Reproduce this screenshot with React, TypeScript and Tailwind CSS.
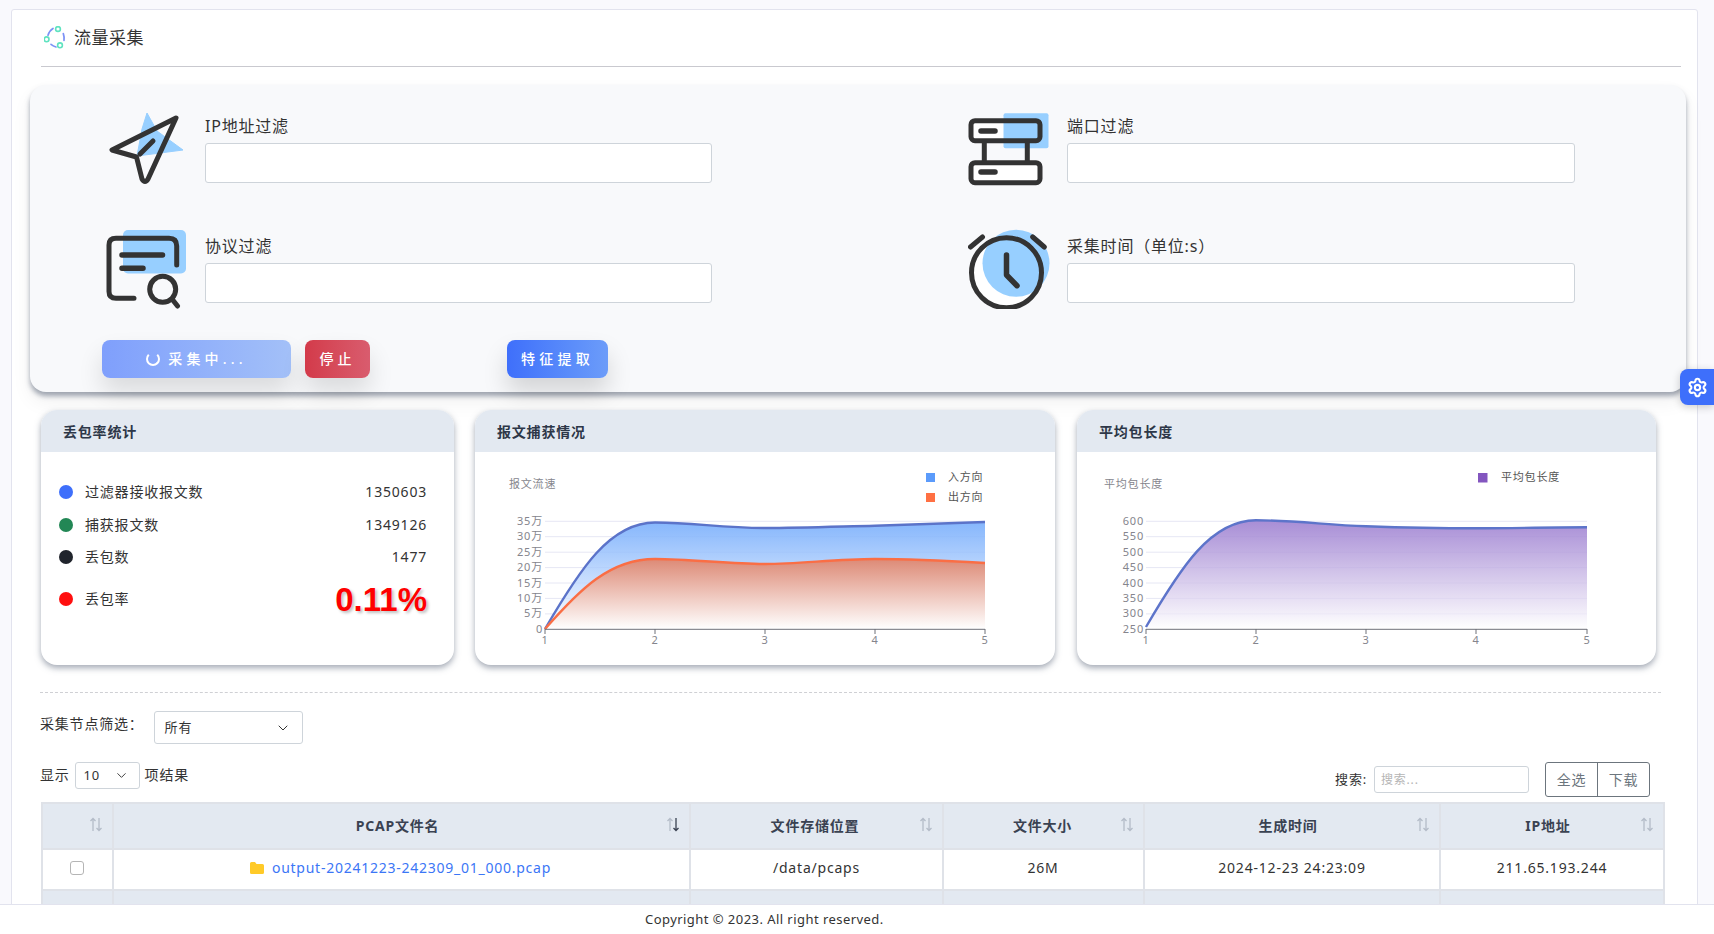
import { ChevronDown, Settings } from "lucide-react"

const cols = [
  { label: "", w: "w-[71px]", pad: "" },
  { label: "PCAP文件名", w: "w-[577px]", pad: "pr-[8px]", active: true },
  { label: "文件存储位置", w: "w-[253px]", pad: "pr-[3px]" },
  { label: "文件大小", w: "w-[201px]", pad: "pr-[2px]" },
  { label: "生成时间", w: "w-[296px]", pad: "pr-[8px]" },
  { label: "IP地址", w: "w-[224px]", pad: "pr-[8px]" },
]

function PlaneIcon() {
  return (
    <svg width="84" height="80" viewBox="0 0 84 80" fill="none" className="shrink-0">
      <path d="M42 4 L52 22 L78 41 L32 47 L37 20 Z" fill="#97cfff" stroke="#97cfff" strokeWidth="1" strokeLinejoin="round" />
      <path
        d="M71 9 L7 41 L31.5 48 L37 70 Q40 75 43 70 Z"
        stroke="#333"
        strokeWidth="5"
        strokeLinejoin="round"
      />
      <path d="M35 45 L48 32" stroke="#333" strokeWidth="5" strokeLinecap="round" />
    </svg>
  )
}

function DocIcon() {
  return (
    <svg width="84" height="80" viewBox="0 0 84 80" fill="none" className="shrink-0">
      <rect x="18" y="1" width="63" height="43.5" rx="5" fill="#97cfff" />
      <path
        d="M71.7 36 V17 Q71.7 9.3 64 9.3 H11 Q4 9.3 4 16 V62.5 Q4 69.3 11 69.3 H29"
        stroke="#333"
        strokeWidth="5"
        strokeLinecap="round"
      />
      <path d="M17 26 H57.5 M17 39.3 H38" stroke="#333" strokeWidth="5.5" strokeLinecap="round" />
      <circle cx="57.7" cy="60.3" r="13" stroke="#333" strokeWidth="5" />
      <path d="M67 70 L72.5 77" stroke="#333" strokeWidth="5" strokeLinecap="round" />
    </svg>
  )
}

function ServerIcon() {
  return (
    <svg width="84" height="80" viewBox="0 0 84 80" fill="none" className="shrink-0">
      <rect x="3" y="11.7" width="69" height="20" rx="4" fill="#fff" />
      <rect x="3" y="53.7" width="69" height="20" rx="4" fill="#fff" />
      <rect x="35.5" y="4.3" width="45" height="35" rx="2" fill="#97cfff" />
      <rect x="3" y="11.7" width="69" height="20" rx="4" stroke="#333" strokeWidth="5" />
      <rect x="3" y="53.7" width="69" height="20" rx="4" stroke="#333" strokeWidth="5" />
      <path d="M16.3 32 V54 M59.3 32 V54" stroke="#333" strokeWidth="5" />
      <path d="M13 22 H27 M13 63 H27" stroke="#333" strokeWidth="5.5" strokeLinecap="round" />
    </svg>
  )
}

function ClockIcon() {
  return (
    <svg width="84" height="80" viewBox="0 0 84 80" fill="none" className="shrink-0">
      <circle cx="38.5" cy="43.7" r="35" fill="#fff" />
      <circle cx="48" cy="34.3" r="33.5" fill="#97cfff" />
      <circle cx="38.5" cy="43.7" r="35" stroke="#333" strokeWidth="5" />
      <path d="M38.5 26 V46 L49 56.7" stroke="#333" strokeWidth="5.5" strokeLinecap="round" strokeLinejoin="round" />
      <path d="M2.5 18 L14.5 8 M64.7 8 L76.3 18" stroke="#333" strokeWidth="5" strokeLinecap="round" />
    </svg>
  )
}

function TitleIcon() {
  return (
    <svg width="24" height="24" viewBox="0 0 24 24" fill="none" className="shrink-0">
      <path d="M4 9.3 Q5.5 4.5 9 2.5" stroke="#7c92f5" strokeWidth="1.7" strokeLinecap="round" />
      <path d="M19.3 7.6 Q20.5 11 20 14.3" stroke="#7c92f5" strokeWidth="1.7" strokeLinecap="round" />
      <path d="M7 18.3 Q9 20 12 21" stroke="#7c92f5" strokeWidth="1.7" strokeLinecap="round" />
      <circle cx="14" cy="3" r="2.4" stroke="#5fe3c0" strokeWidth="1.6" fill="#fff" />
      <circle cx="2.6" cy="13.3" r="2.4" stroke="#5fe3c0" strokeWidth="1.6" fill="#fff" />
      <circle cx="16" cy="19.3" r="2.4" stroke="#5fe3c0" strokeWidth="1.6" fill="#fff" />
    </svg>
  )
}

function SortIcon({ active }: { active?: boolean }) {
  return (
    <svg width="14" height="15" viewBox="0 0 14 15" fill="none" className="block">
      <path d="M4 14 V1.5 M1.5 4 L4 1.5 L6.5 4" stroke="#b4bcc8" strokeWidth="1.3" />
      <path d="M10 1 V13.5 M7.5 11 L10 13.5 L12.5 11" stroke={active ? "#3a4252" : "#b4bcc8"} strokeWidth="1.3" />
    </svg>
  )
}

function FilterItem({ icon, label, right }: { icon: React.ReactNode; label: string; right?: boolean }) {
  return (
    <div className={right ? "flex items-center h-[68px] pl-[1px]" : "flex items-center h-[68px]"}>
      {icon}
      <div className={right ? "ml-[15px] w-[508px]" : "ml-4 w-[507px]"}>
        <div className="h-6 leading-[22px] text-base text-[#333] mb-1">{label}</div>
        <input className="block w-full h-10 bg-white border border-[#ced4da] rounded-[3px]" />
      </div>
    </div>
  )
}

function Card({ title, width, children }: { title: string; width: string; children: React.ReactNode }) {
  return (
    <div className={`${width} h-[255px] bg-white rounded-2xl overflow-hidden shadow-[0_3px_6px_rgba(90,100,120,0.55)]`}>
      <div className="h-[42px] bg-[#e3e9f1] pl-[22px] pt-[1px] flex items-center text-sm font-bold text-[#2d3748]">{title}</div>
      {children}
    </div>
  )
}

function Stat({ color, label, value }: { color: string; label: string; value: string }) {
  return (
    <div className="flex items-center h-[32.5px] text-sm text-[#333]">
      <span className={`w-3.5 h-3.5 rounded-full ${color}`} />
      <span className="ml-[12px]">{label}</span>
      <span className="ml-auto">{value}</span>
    </div>
  )
}

function Axis({ x, labels }: { x: number[]; labels: string[] }) {
  const ys = [522.3, 537.7, 553.2, 568.6, 584, 599.4, 614.9, 630.3]
  return (
    <g>
      {ys.slice(0, 7).map((y) => (
        <line key={y} x1={x[0]} x2={x[4]} y1={y} y2={y} stroke="#e6e7f4" />
      ))}
      {labels.map((l, i) => (
        <text key={l} x={x[0] - 2} y={ys[i] + 3.5} textAnchor="end" fontSize="11" fill="#85858d">
          {l}
        </text>
      ))}
    </g>
  )
}

function AxisBottom({ x }: { x: number[] }) {
  return (
    <g>
      <line x1={x[0]} x2={x[4]} y1="630.3" y2="630.3" stroke="#6e7079" />
      {x.map((v, i) => (
        <g key={v}>
          <line x1={v} x2={v} y1="630" y2="635" stroke="#6e7079" />
          <text x={v} y="645" textAnchor="middle" fontSize="11" fill="#85858d">
            {i + 1}
          </text>
        </g>
      ))}
    </g>
  )
}

function TrafficChart() {
  const x = [545, 655, 765, 875, 985]
  const blue = "M545 630 C580 570 610 523.5 655 523.5 C695 523.5 720 529 765 529 C800 529 840 527.5 875 526.7 C915 525.5 950 524 985 523"
  const orange = "M545 630 C580 590 610 560 655 560 C690 560 730 565 765 565 C800 565 835 560 875 560 C915 560 950 562 985 564"
  return (
    <svg width="580" height="213" viewBox="475 453 580 213" className="block">
      <defs>
        <linearGradient id="inFill" gradientUnits="userSpaceOnUse" x1="0" y1="523" x2="0" y2="630">
          <stop offset="0" stopColor="#4d94fb" stopOpacity="0.68" />
          <stop offset="1" stopColor="#4d94fb" stopOpacity="0" />
        </linearGradient>
        <linearGradient id="outFill" gradientUnits="userSpaceOnUse" x1="0" y1="560" x2="0" y2="630">
          <stop offset="0" stopColor="#dd8a76" />
          <stop offset="1" stopColor="#ffffff" />
        </linearGradient>
      </defs>
      <Axis x={x} labels={["35万", "30万", "25万", "20万", "15万", "10万", "5万", "0"]} />
      <path d={`${blue} V630 H545 Z`} fill="#fff" fillOpacity="0.65" />
      <path d={`${blue} V630 H545 Z`} fill="url(#inFill)" />
      <path d={`${orange} V630 H545 Z`} fill="url(#outFill)" />
      <path d={blue} fill="none" stroke="#5b73c9" strokeWidth="2.4" />
      <path d={orange} fill="none" stroke="#fa6e45" strokeWidth="2.4" />
      <AxisBottom x={x} />
      <text x="509" y="489" fontSize="11" fill="#85858d">报文流速</text>
      <rect x="926" y="474" width="9" height="9" fill="#5b9bfb" />
      <text x="948" y="482" fontSize="11" fill="#555">入方向</text>
      <rect x="926" y="494" width="9" height="9" fill="#ff7043" />
      <text x="948" y="502" fontSize="11" fill="#555">出方向</text>
    </svg>
  )
}

function LengthChart() {
  const x = [1146, 1256, 1366, 1476, 1587]
  const line = "M1146 628 C1181 568 1211 521.3 1256 521.3 C1296 521.3 1326 526 1366 527.3 C1401 528.5 1441 529.3 1476 529.3 C1516 529.3 1551 528.3 1587 528.3"
  return (
    <svg width="579" height="213" viewBox="1077 453 579 213" className="block">
      <defs>
        <linearGradient id="lenFill" gradientUnits="userSpaceOnUse" x1="0" y1="521" x2="0" y2="630">
          <stop offset="0" stopColor="#7e57c2" stopOpacity="0.68" />
          <stop offset="1" stopColor="#7e57c2" stopOpacity="0" />
        </linearGradient>
      </defs>
      <Axis x={x} labels={["600", "550", "500", "450", "400", "350", "300", "250"]} />
      <path d={`${line} V630 H1146 Z`} fill="#fff" fillOpacity="0.65" />
      <path d={`${line} V630 H1146 Z`} fill="url(#lenFill)" />
      <path d={line} fill="none" stroke="#5d74ca" strokeWidth="2.4" />
      <AxisBottom x={x} />
      <text x="1104" y="489" fontSize="11" fill="#85858d">平均包长度</text>
      <rect x="1478" y="474" width="9.5" height="9.5" fill="#8356bf" />
      <text x="1501" y="482" fontSize="11" fill="#555">平均包长度</text>
    </svg>
  )
}

export default function App() {
  return (
    <div className="h-screen flex flex-col overflow-hidden bg-[#f9f9fd] tracking-[0.05em] text-[#333] [font-family:'Noto_Sans','Noto_Sans_CJK_SC',sans-serif]">
      <main className="flex-1 min-h-0 overflow-hidden pl-[11px] pr-[16px] pt-[9px]">
        <div className="h-[930px] bg-white border border-[#e2e3ee] rounded-[3px]">
          {/* Title */}
          <div className="ml-[29px] mr-[16px] h-[57px] border-b border-[#c9c9cf] flex items-center gap-[6px] pl-[3px] pb-[1px]">
            <TitleIcon />
            <span className="text-[17px] text-[#333] tracking-[0.5px]">流量采集</span>
          </div>

          {/* Filter panel */}
          <div className="ml-[18px] mr-[11px] mt-[18px] h-[307px] bg-[#f8f9fb] rounded-2xl pl-[72px] pt-[30px] shadow-[0_4px_5px_rgba(90,100,120,0.55),0_10px_20px_rgba(0,0,0,0.06)]">
            <div className="ml-[3px] grid grid-cols-[862px_1fr] gap-y-[52px]">
              <FilterItem icon={<PlaneIcon />} label="IP地址过滤" />
              <FilterItem icon={<ServerIcon />} label="端口过滤" right />
              <FilterItem icon={<DocIcon />} label="协议过滤" />
              <FilterItem icon={<ClockIcon />} label="采集时间（单位:s）" right />
            </div>
            <div className="flex mt-[37px] text-sm font-medium text-white">
              <button className="w-[189px] h-[38px] rounded-lg bg-gradient-to-r from-[#7f9ffc] to-[#a3c0f8] flex items-center justify-center gap-[8px] tracking-[4.2px] shadow-[0_14px_24px_rgba(0,0,0,0.12)]">
                <span className="w-[14px] h-[14px] rounded-full border-2 border-white border-t-transparent" />
                采集中...
              </button>
              <button className="ml-[14px] w-[65px] h-[38px] rounded-lg bg-gradient-to-r from-[#d33a4a] to-[#d95c6e] tracking-[4px] shadow-[0_14px_24px_rgba(0,0,0,0.12)]">
                停止
              </button>
              <button className="ml-[137px] w-[101px] h-[38px] rounded-lg bg-gradient-to-r from-[#3f6ffb] to-[#6c9cf9] tracking-[4.2px] shadow-[0_14px_24px_rgba(0,0,0,0.15)]">
                特征提取
              </button>
            </div>
          </div>

          {/* Stat cards */}
          <div className="ml-[29px] mt-[18px] flex">
            <Card title="丢包率统计" width="w-[413px]">
              <div className="pl-[18px] pr-[27px] pt-[24px]">
                <Stat color="bg-[#3e6ffb]" label="过滤器接收报文数" value="1350603" />
                <Stat color="bg-[#228755]" label="捕获报文数" value="1349126" />
                <Stat color="bg-[#20242c]" label="丢包数" value="1477" />
                <div className="flex items-center h-[50px] text-sm text-[#333]">
                  <span className="w-3.5 h-3.5 rounded-full bg-[#ff0f0f]" />
                  <span className="ml-[12px]">丢包率</span>
                  <span className="ml-auto pt-[3px] text-[33px] tracking-normal font-bold text-[#ff0000] [font-family:'Liberation_Sans',sans-serif] [text-shadow:2px_2px_3px_rgba(0,0,0,0.25)]">
                    0.11%
                  </span>
                </div>
              </div>
            </Card>
            <div className="ml-[21px]">
              <Card title="报文捕获情况" width="w-[580px]">
                <TrafficChart />
              </Card>
            </div>
            <div className="ml-[22px]">
              <Card title="平均包长度" width="w-[579px]">
                <LengthChart />
              </Card>
            </div>
          </div>

          <div className="ml-[28px] w-[1621px] mt-[27px] border-t border-dashed border-[#cfd0d4]" />

          {/* Node filter */}
          <div className="ml-[28px] mt-[18px] flex items-center h-[33px] text-sm">
            <span className="-mt-[7px]">采集节点筛选：</span>
            <div className="ml-[10px] w-[149px] h-[33px] border border-[#ced4da] rounded-[3px] flex items-center justify-between pl-[10px] pr-[11px] text-[13px]">
              <span>所有</span>
              <ChevronDown size={16} strokeWidth={1.5} />
            </div>
          </div>

          {/* Table toolbar */}
          <div className="ml-[28px] w-[1610px] mt-[18px] h-[35px] flex items-center text-sm">
            <span className="-mt-[9px] flex items-center">显示</span>
            <div className="ml-[5px] -mt-[8px] w-[65px] h-[27px] border border-[#ced4da] rounded-[3px] flex items-center justify-between pl-[8px] pr-[10px] text-[13px]">
              <span>10</span>
              <ChevronDown size={15} strokeWidth={1.5} />
            </div>
            <span className="ml-[5px] -mt-[9px]">项结果</span>
            <span className="ml-auto text-[13px]">搜索:</span>
            <input
              placeholder="搜索..."
              className="ml-[7px] w-[155px] h-[27px] px-[6px] border border-[#ced4da] rounded-[3px] text-xs placeholder:text-[#b5b5b5]"
            />
            <div className="ml-[16px] w-[105px] h-[35px] flex border border-[#6c757d] rounded-[3px] text-sm text-[#6c757d]">
              <span className="w-[52px] border-r border-[#6c757d] flex items-center justify-center">全选</span>
              <span className="flex-1 flex items-center justify-center">下载</span>
            </div>
          </div>

          {/* File table */}
          <table className="ml-[29px] mt-[5px] w-[1622px] table-fixed border-collapse text-sm">
            <thead>
              <tr className="h-[46px] bg-[#e3e9f1]">
                {cols.map((c) => (
                  <th key={c.label} className={`${c.w} ${c.pad} relative border-2 border-[#dfe2e8] font-bold text-[#3a4252]`}>
                    {c.label}
                    <span className="absolute right-[9px] top-[13px]">
                      <SortIcon active={c.active} />
                    </span>
                  </th>
                ))}
              </tr>
            </thead>
            <tbody>
              <tr className="h-[41px] text-center bg-white">
                <td className="border-2 border-[#dfe2e8] pb-[3px]">
                  <span className="block mx-auto w-[14px] h-[14px] rounded-[3px] border border-[#b5b5b5] -translate-x-[1px]" />
                </td>
                <td className="border-2 border-[#dfe2e8] pb-[3px] pr-[2px]">
                  <span className="inline-flex items-center gap-[8px] text-[#3b76f6] tracking-[0.75px]">
                    <svg width="14" height="12" viewBox="0 0 14 12" fill="#ffca28">
                      <path d="M0 1.5 Q0 0 1.5 0 H5 L6.5 2 H12.5 Q14 2 14 3.5 V10.5 Q14 12 12.5 12 H1.5 Q0 12 0 10.5 Z" />
                    </svg>
                    output-20241223-242309_01_000.pcap
                  </span>
                </td>
                <td className="border-2 border-[#dfe2e8] pb-[3px]">/data/pcaps</td>
                <td className="border-2 border-[#dfe2e8] pb-[3px] pr-[1px]">26M</td>
                <td className="border-2 border-[#dfe2e8] pb-[3px]">2024-12-23 24:23:09</td>
                <td className="border-2 border-[#dfe2e8] pb-[3px]">211.65.193.244</td>
              </tr>
              <tr className="h-[42px] bg-[#e3e9f1]">
                <td className="border-2 border-[#dfe2e8]">
                  <span className="block mx-auto w-[14px] h-[14px] rounded-[3px] border border-[#b5b5b5] bg-white -translate-x-[1px]" />
                </td>
                <td className="border-2 border-[#dfe2e8]" />
                <td className="border-2 border-[#dfe2e8]" />
                <td className="border-2 border-[#dfe2e8]" />
                <td className="border-2 border-[#dfe2e8]" />
                <td className="border-2 border-[#dfe2e8]" />
              </tr>
            </tbody>
          </table>
        </div>
      </main>

      <footer className="h-[30px] shrink-0 bg-white border-t border-[#e2e3ee] flex items-center pl-[645px] text-[13px] tracking-[0.45px] text-[#333]">
        Copyright © 2023. All right reserved.
      </footer>

      {/* Settings tab */}
      <div className="absolute left-[1680px] top-[369px] w-[34px] h-[36px] bg-[#3e6ffb] rounded-l-lg flex items-center justify-center shadow-[0_2px_8px_rgba(0,0,0,0.2)]">
        <Settings size={21} strokeWidth={2.4} className="text-white" />
      </div>
    </div>
  )
}
